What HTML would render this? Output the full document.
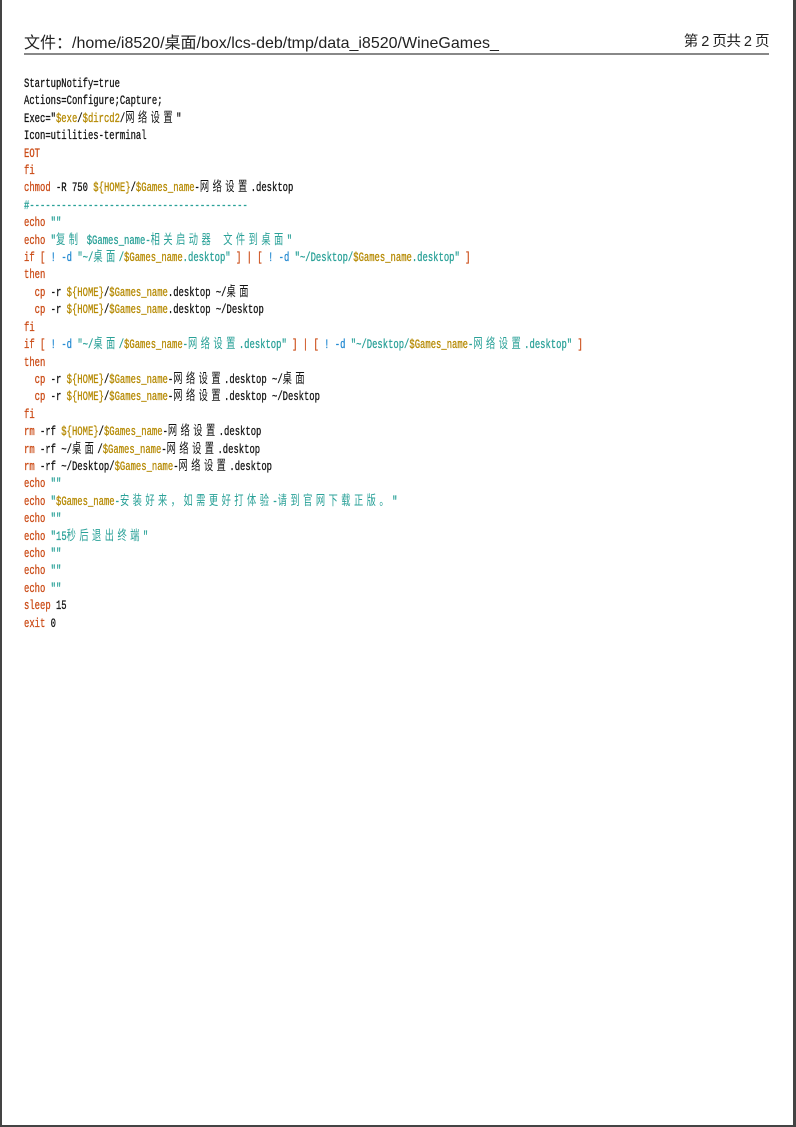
<!DOCTYPE html>
<html><head><meta charset="utf-8"><style>
html,body{margin:0;padding:0;background:#fff}
body{width:796px;height:1127px;position:relative;overflow:hidden}
.page{position:absolute;left:0;top:0;background:#fff;border-left:2px solid #444;border-right:3px solid #444;border-bottom:2px solid #444;box-sizing:border-box;width:796px;height:1127px}
.hdr{position:absolute;left:22px;top:29px;font:16px "Liberation Sans","Noto Sans CJK SC",sans-serif;color:#222;white-space:nowrap}
.hdr2{position:absolute;right:24px;top:30px;font:14.5px "Liberation Sans","Noto Sans CJK SC",sans-serif;color:#222;letter-spacing:-0.5px}
.rule{position:absolute;left:22px;top:53px;width:745px;height:2px;background:#888}
.code{position:absolute;left:22px;top:75px;font:13px/17.4px "Liberation Mono","Noto Sans CJK SC",monospace;color:#111;white-space:pre;transform:scaleX(0.683);transform-origin:0 0;-webkit-text-stroke:0.3px}
.c{font-size:13.5px;line-height:10px;letter-spacing:5.1px;-webkit-text-stroke:0}
.k{color:#cb4b16}.s{color:#2aa198}.v{color:#b58900}.b{color:#268bd2}
</style></head><body><div class="page">
<div class="hdr">文件：/home/i8520/桌面/box/lcs-deb/tmp/data_i8520/WineGames_</div>
<div class="hdr2">第 2 页共 2 页</div>
<div class="rule"></div>
<div class="code">StartupNotify=true
Actions=Configure;Capture;
Exec="<span class="v">$exe</span>/<span class="v">$dircd2</span>/<span class="c">网络设置</span>"
Icon=utilities-terminal
<span class="k">EOT</span>
<span class="k">fi</span>
<span class="k">chmod</span> -R 750 <span class="v">${HOME}</span>/<span class="v">$Games_name</span>-<span class="c">网络设置</span>.desktop
<span class="s">#-----------------------------------------</span>
<span class="k">echo</span> <span class="s">""</span>
<span class="k">echo</span> <span class="s">"<span class="c">复制</span> $Games_name-<span class="c">相关启动器 文件到桌面</span>"</span>
<span class="k">if</span> <span class="k">[</span> <span class="b">! -d</span> <span class="s">"~/<span class="c">桌面</span>/<span class="v">$Games_name</span>.desktop"</span> <span class="k">] | [</span> <span class="b">! -d</span> <span class="s">"~/Desktop/<span class="v">$Games_name</span>.desktop"</span> <span class="k">]</span>
<span class="k">then</span>
  <span class="k">cp</span> -r <span class="v">${HOME}</span>/<span class="v">$Games_name</span>.desktop ~/<span class="c">桌面</span>
  <span class="k">cp</span> -r <span class="v">${HOME}</span>/<span class="v">$Games_name</span>.desktop ~/Desktop
<span class="k">fi</span>
<span class="k">if</span> <span class="k">[</span> <span class="b">! -d</span> <span class="s">"~/<span class="c">桌面</span>/<span class="v">$Games_name</span>-<span class="c">网络设置</span>.desktop"</span> <span class="k">] | [</span> <span class="b">! -d</span> <span class="s">"~/Desktop/<span class="v">$Games_name</span>-<span class="c">网络设置</span>.desktop"</span> <span class="k">]</span>
<span class="k">then</span>
  <span class="k">cp</span> -r <span class="v">${HOME}</span>/<span class="v">$Games_name</span>-<span class="c">网络设置</span>.desktop ~/<span class="c">桌面</span>
  <span class="k">cp</span> -r <span class="v">${HOME}</span>/<span class="v">$Games_name</span>-<span class="c">网络设置</span>.desktop ~/Desktop
<span class="k">fi</span>
<span class="k">rm</span> -rf <span class="v">${HOME}</span>/<span class="v">$Games_name</span>-<span class="c">网络设置</span>.desktop
<span class="k">rm</span> -rf ~/<span class="c">桌面</span>/<span class="v">$Games_name</span>-<span class="c">网络设置</span>.desktop
<span class="k">rm</span> -rf ~/Desktop/<span class="v">$Games_name</span>-<span class="c">网络设置</span>.desktop
<span class="k">echo</span> <span class="s">""</span>
<span class="k">echo</span> <span class="s">"<span class="v">$Games_name</span>-<span class="c">安装好来，如需更好打体验</span>-<span class="c">请到官网下载正版。</span>"</span>
<span class="k">echo</span> <span class="s">""</span>
<span class="k">echo</span> <span class="s">"15<span class="c">秒后退出终端</span>"</span>
<span class="k">echo</span> <span class="s">""</span>
<span class="k">echo</span> <span class="s">""</span>
<span class="k">echo</span> <span class="s">""</span>
<span class="k">sleep</span> 15
<span class="k">exit</span> 0</div>
</div></body></html>
